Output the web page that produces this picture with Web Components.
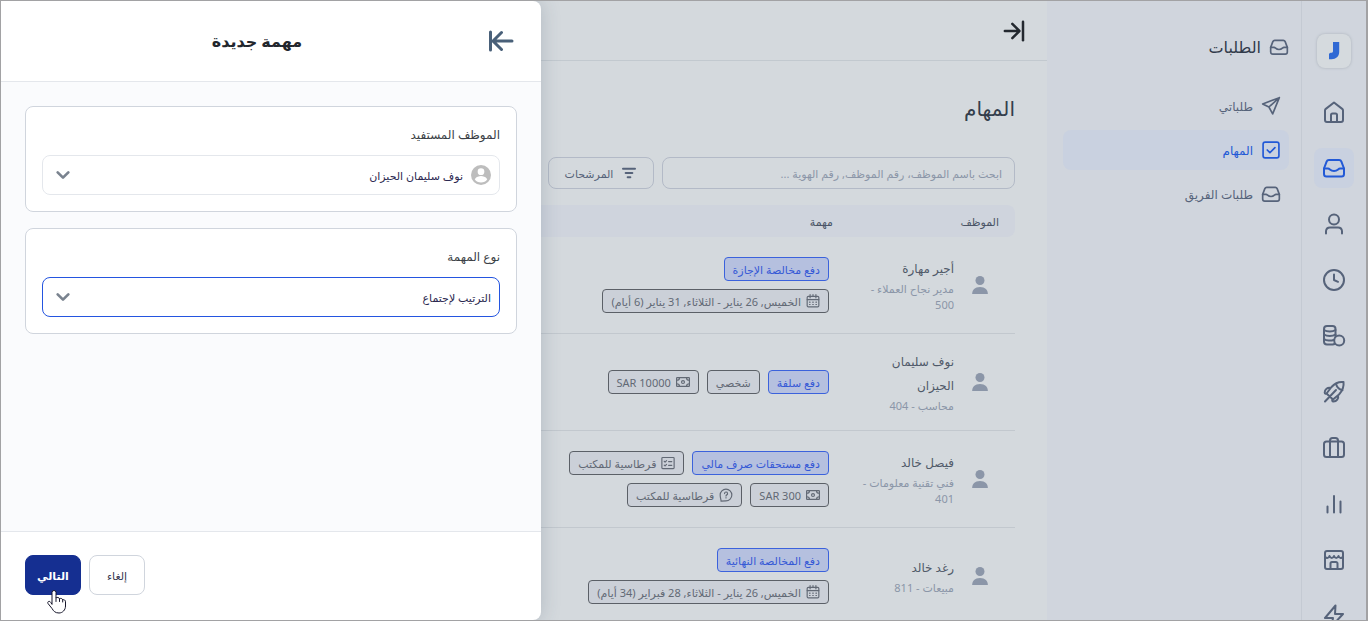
<!DOCTYPE html>
<html lang="ar" dir="rtl">
<head>
<meta charset="utf-8">
<meta name="viewport" content="width=device-width, initial-scale=1">
<title>المهام</title>
<style>
  body {
    margin: 0;
    font-family: "Noto Sans", "DejaVu Sans", sans-serif;
    color: #3f4a5a;
  }
</style>
</head>
<body>
<task-app></task-app>

<script>
const ICONS = {
  home: '<path d="M3 10.500a2 2 0 0 1 .8-1.600L12 2.500l8.200 6.400a2 2 0 0 1 .8 1.600V20a2 2 0 0 1-2 2H5a2 2 0 0 1-2-2z"/><path d="M9 22v-7a1.500 1.500 0 0 1 1.500-1.500h3A1.500 1.500 0 0 1 15 15v7"/>',
  inbox: '<path d="M2 12.500 4.600 5.600A2.500 2.500 0 0 1 7 4h10a2.500 2.500 0 0 1 2.400 1.600L22 12.500V18a2.500 2.500 0 0 1-2.500 2.500h-15A2.500 2.500 0 0 1 2 18z"/><path d="M2 12.500h4c2 0 2 2.500 6 2.500s4-2.500 6-2.500h4"/>',
  user: '<circle cx="12" cy="7.500" r="5"/><path d="M4 21.500v-2.500a4 4 0 0 1 4-3.500h8a4 4 0 0 1 4 3.500v2.500"/>',
  clock: '<circle cx="12" cy="12" r="10"/><path d="M12 6.500V12l4 1.800"/>',
  coins: '<rect x="2" y="2" width="11.500" height="18.500" rx="3"/><path d="M2 6c3 2 8.500 2 11.500 0M2 10.500c3 2 8.500 2 11.500 0M2 15c2.500 1.800 7 2 9.500 1"/><circle cx="17.200" cy="16.500" r="5" fill="#d0d5dd"/>',
  rocket: '<path d="M21.500 2c.6 4.500-.8 8.500-4.500 12.500l-6 5-6.500-6 5-6.500c3.500-4 7.500-5.500 12-5zM14 3.800a9 9 0 0 0 6.500 6.500M14 10 3 21.500M8.700 8c-3.200-.8-6 1.500-6 4.500 0 1.500 1.500 1.500 2.300 1M16 15.500c1 3.200-1.500 6-4.500 6-1.500 0-1.500-1.500-1-2.300"/>',
  briefcase: '<rect x="2" y="5.500" width="20" height="15.500" rx="2.500"/><path d="M8 21V4.500a2.500 2.500 0 0 1 2.500-2.500h3A2.500 2.500 0 0 1 16 4.500V21"/>',
  bars: '<path d="M5.500 14.500v6M12 4v16.500M18.500 9.500v11"/>',
  store: '<rect x="3" y="3" width="18" height="18" rx="2"/><path d="M3 8.500c1 2.200 3.700 2.200 4.500-.5 1 2.700 3.500 2.700 4.500 0 1 2.700 3.500 2.700 4.500 0 .8 2.700 3.500 2.700 4.500.5M8.500 21v-5.500A1.500 1.500 0 0 1 10 14h4a1.500 1.500 0 0 1 1.500 1.500V21"/>',
  bolt: '<path d="M13.500 1.500 3 14h8l-1.500 8.500L21 10h-8z"/>',
  send: '<path d="M22 2 2 9.500l7.500 3.700 4.500 8.300zM22 2 9.500 13.200"/>',
  check: '<rect x="2.500" y="2.500" width="19" height="19" rx="2.500"/><path d="m7.500 12 3.200 3.200 6-6"/>',
  enter: '<path d="M1 12h17M10 3.500l8.500 8.500-8.500 8.500"/><path d="M22.800 1v22"/>',
  leave: '<path d="M23 12H4M12.500 3.500 4 12l8.500 8.500M1.500 3v18"/>',
  filter: '<path d="M3 5.500h18M7 12h10M10 18.500h4"/>',
  avatar: '<g fill="currentColor" stroke="none"><circle cx="12" cy="6" r="6"/><path d="M1.500 24c0-5.500 3.500-9.500 10.500-9.500S22.500 18.500 22.500 24z"/></g>',
  face: '<g stroke="none"><circle cx="12" cy="12" r="12" fill="#bdbdbd"/><circle cx="12" cy="8" r="4" fill="#fff"/><path d="M4.500 17c2-3 5-3.800 7.500-3.800s5.500.8 7.500 3.800c-1.500 2.600-4.500 4-7.500 4s-6-1.400-7.500-4z" fill="#fff"/></g>',
  chevron: '<path d="m4 8 8 8 8-8"/>',
  calendar: '<rect x="2" y="4" width="20" height="18" rx="2"/><path d="M2 9.500h20M7 1v5.500M17 1v5.500M12 1v3"/><path d="M6 14h1M11.500 14h1M17 14h1M6 18h1M11.500 18h1M17 18h1"/>',
  cash: '<rect x="1" y="4.500" width="22" height="15" rx="1"/><circle cx="12" cy="12" r="2.500"/><path d="M1 9c3 0 5-2 5-4.500M23 9c-3 0-5-2-5-4.500M1 15c3 0 5 2 5 4.500M23 15c-3 0-5 2-5 4.500"/>',
  list: '<rect x="1.500" y="2.500" width="21" height="19" rx="1.500"/><path d="m5.500 9 1.500 1.500L9.500 8M5.500 15.500 7 17l2.500-2.500M13 9.500h5.500M13 16h5.500"/>',
  question: '<path d="M3.500 22.500c.5-2-1.500-5-1.500-10.500a10 10 0 1 1 10 10z"/><path d="M9.500 9.500a2.600 2.600 0 1 1 3.800 2.300c-.9.500-1.300 1-1.300 2M12 16.500v.5"/>',
  logo: '<path d="M11 3h6.200v10c0 4.500-3.200 7.200-7.700 7.200H7v-5.400l1.500-1h.8c1.200 0 1.700-.6 1.700-1.800z" fill="currentColor" stroke="none"/>',
  hand: '<path d="M8 15V3.500a2 2 0 0 1 4 0V9c1-1 3-.8 3.500.8 1-.8 2.800-.4 3.200 1 1.200-.5 2.800.3 2.800 2V17c0 4-3 7-6.500 7-4 0-5.500-2-7-4.500l-4-5c-1-2 1.500-3 2.500-1.500z" fill="#fff"/><path d="M12 9v3.500M15.500 10v2.500M18.700 11v2"/>'
};

class UiIcon extends HTMLElement {
  connectedCallback() {
    const root = this.attachShadow({ mode: 'open' });
    root.innerHTML = `
      <style>
        :host { display: block; flex: none; width: var(--size, 24px); height: var(--size, 24px); }
        svg { display: block; width: 100%; height: 100%; overflow: visible; fill: none; stroke: currentColor;
          stroke-width: var(--stroke, 2); stroke-linecap: round; stroke-linejoin: round; }
      </style>
      <svg viewBox="0 0 24 24" aria-hidden="true">${ICONS[this.getAttribute('name')]}</svg>
    `;
  }
}

class AppRail extends HTMLElement {
  constructor() {
    super();
    const items = [
      ['home', 'الرئيسية'], ['inbox', 'الطلبات'], ['user', 'الموظفون'], ['clock', 'الحضور'], ['coins', 'الرواتب'],
      ['rocket', 'الأداء'], ['briefcase', 'التوظيف'], ['bars', 'التقارير'], ['store', 'المتجر'], ['bolt', 'الأتمتة']
    ];
    this.attachShadow({ mode: 'open' }).innerHTML = `
      <style>
        :host { display: flex; flex-direction: column; align-items: center; flex: none; width: 65px; box-sizing: border-box;
          padding-top: 33px; border-left: 1px solid #c4cad3; background: #d0d5dd; overflow: hidden; }
        .logo { display: grid; place-items: center; flex: none; width: 34px; height: 34px; box-sizing: border-box;
          margin-bottom: 24px; border-radius: 8px; background: #d5dade; box-shadow: 0 0 3px #a9b0b9; color: #3069d4; }
        nav { display: flex; flex: none; flex-direction: column; gap: 16px; }
        a { display: grid; place-items: center; width: 40px; height: 40px; border-radius: 8px; color: #56637a; }
        a.on { background: #c9d1e0; color: #2259d6; }
      </style>
      <div class="logo"><ui-icon name="logo"></ui-icon></div>
      <nav>${items.map(([icon, label]) => `
        <a href="#${icon}" aria-label="${label}" class="${icon === 'inbox' ? 'on' : ''}"><ui-icon name="${icon}"></ui-icon></a>`).join('')}
      </nav>
    `;
  }
}

class SideMenu extends HTMLElement {
  constructor() {
    super();
    this.attachShadow({ mode: 'open' }).innerHTML = `
      <style>
        :host { display: block; flex: none; width: 254px; box-sizing: border-box; padding: 30px 12px 0 16px; background: #d0d5dd; }
        h2 { --size: 20px; display: flex; align-items: center; gap: 8px; height: 32px; margin: 0 0 23px;
          font-size: 16px; font-weight: 500; color: #303a4a; }
        h2 ui-icon { color: #56637a; }
        nav { display: flex; flex-direction: column; gap: 4px; }
      </style>
      <h2><ui-icon name="inbox"></ui-icon>الطلبات</h2>
      <nav><slot></slot></nav>
    `;
  }
}

class SideLink extends HTMLElement {
  connectedCallback() {
    this.attachShadow({ mode: 'open' }).innerHTML = `
      <style>
        :host { --size: 20px; display: block; font-size: 12px; color: #56637a; }
        :host([active]) { color: #2259d6; }
        a { display: flex; align-items: center; gap: 8px; height: 40px; padding: 0 8px; border-radius: 8px; color: inherit; text-decoration: none; }
        :host([active]) a { background: #c9d1e0; }
      </style>
      <a href="#"><ui-icon name="${this.getAttribute('icon')}"></ui-icon><slot></slot></a>
    `;
  }
}

class TaskChip extends HTMLElement {
  connectedCallback() {
    const icon = this.getAttribute('icon');
    this.attachShadow({ mode: 'open' }).innerHTML = `
      <style>
        :host { --size: 14px; --stroke: 2; display: flex; align-items: center; gap: 5px; height: 24px; box-sizing: border-box;
          padding: 0 8px; border: 1px solid #5b6067; border-radius: 4px; background: #cbd0d8; color: #626975;
          font-size: 11px; white-space: nowrap; }
        :host([primary]) { border-color: #3b62dc; background: #b5c0df; color: #3559d6; font-weight: 500; }
      </style>
      ${icon ? `<ui-icon name="${icon}"></ui-icon>` : ''}<slot></slot>
    `;
  }
}

class TaskTable extends HTMLElement {
  constructor() {
    super();
    const rows = [
      ['أجير مهارة', 'مدير نجاح العملاء -<br>500',
        '<task-chip primary>دفع مخالصة الإجازة</task-chip><task-chip icon="calendar">الخميس, 26 يناير - الثلاثاء, 31 يناير (6 أيام)</task-chip>'],
      ['نوف سليمان<br>الحيزان', 'محاسب - 404',
        '<task-chip primary>دفع سلفة</task-chip><task-chip>شخصي</task-chip><task-chip icon="cash"><bdi dir="ltr">SAR 10000</bdi></task-chip>'],
      ['فيصل خالد', 'فني تقنية معلومات -<br>401',
        '<task-chip primary>دفع مستحقات صرف مالي</task-chip><task-chip icon="list">قرطاسية للمكتب</task-chip><task-chip icon="cash"><bdi dir="ltr">SAR 300</bdi></task-chip><task-chip icon="question">قرطاسية للمكتب</task-chip>'],
      ['رغد خالد', 'مبيعات - 811',
        '<task-chip primary>دفع المخالصة النهائية</task-chip><task-chip icon="calendar">الخميس, 26 يناير - الثلاثاء, 28 فبراير (34 أيام)</task-chip>']
    ];
    this.attachShadow({ mode: 'open' }).innerHTML = `
      <style>
        :host { display: block; }
        table { width: 100%; table-layout: fixed; border-collapse: separate; border-spacing: 0; }
        th { height: 32px; padding: 0 16px; background: #cfd4dd; font-size: 11px; font-weight: 400; text-align: start; color: #4a5466; }
        th + th { padding: 0 12px; }
        th:first-child { width: 138px; border-radius: 0 8px 8px 0; }
        th:last-child { border-radius: 8px 0 0 8px; }
        td { height: 96px; padding: 0 16px; border-bottom: 1px solid #c2c8ce; }
        td:first-child { padding: 0 26px 0 0; }
        .person { --size: 18px; display: flex; align-items: center; gap: 17px; color: #8b96a8; }
        .name { font-size: 12px; line-height: 24px; color: #505a69; white-space: nowrap; }
        .role { font-size: 11px; line-height: 16px; color: #8b96a8; white-space: nowrap; }
        .chips { display: flex; flex-wrap: wrap; gap: 8px; max-width: 264px; }
      </style>
      <table>
        <thead><tr><th>الموظف</th><th>مهمة</th></tr></thead>
        <tbody>${rows.map(([name, role, chips]) => `
          <tr>
            <td><div class="person"><ui-icon name="avatar"></ui-icon><div><div class="name">${name}</div><div class="role">${role}</div></div></div></td>
            <td><div class="chips">${chips}</div></td>
          </tr>`).join('')}
        </tbody>
      </table>
    `;
  }
}

class TaskPage extends HTMLElement {
  constructor() {
    super();
    this.attachShadow({ mode: 'open' }).innerHTML = `
      <style>
        :host { display: block; flex: 1; min-width: 0; background: #d4d9dd; }
        header { display: flex; align-items: center; height: 59px; padding: 0 23px; border-bottom: 1px solid #c2c9cf; }
        button { font: inherit; cursor: pointer; }
        header button { --size: 20px; --stroke: 3; padding: 0; border: 0; background: none; color: #23282f; }
        main { padding: 28px 32px 0; }
        h1 { margin: 0 0 28px; font-size: 20px; line-height: 40px; font-weight: 500; color: #333e4c; }
        .tools { display: flex; gap: 8px; margin-bottom: 16px; }
        input { width: 353px; height: 32px; box-sizing: border-box; padding: 0 12px; border: 1px solid #b3bac7; border-radius: 8px;
          background: none; font: inherit; font-size: 11px; color: #505a69; }
        input::placeholder { color: #8b96a8; opacity: 1; }
        .filter { --size: 16px; --stroke: 3; display: flex; align-items: center; justify-content: center; gap: 8px; width: 106px; height: 32px;
          padding: 0; border: 1px solid #b3bac7; border-radius: 8px; background: none; font-size: 11px; color: #56637a; }
      </style>
      <header><button aria-label="طي القائمة"><ui-icon name="enter"></ui-icon></button></header>
      <main>
        <h1>المهام</h1>
        <div class="tools">
          <input type="search" aria-label="بحث" placeholder="ابحث باسم الموظف، رقم الموظف, رقم الهوية ...">
          <button class="filter"><ui-icon name="filter"></ui-icon>المرشحات</button>
        </div>
        <task-table></task-table>
      </main>
    `;
  }
}

class SelectCard extends HTMLElement {
  connectedCallback() {
    const avatar = this.hasAttribute('avatar');
    this.attachShadow({ mode: 'open' }).innerHTML = `
      <style>
        :host { display: block; padding: 16px; border: 1px solid #d0d5dd; border-radius: 8px; background: #fff; }
        label { display: block; margin-bottom: 8px; font-size: 12px; line-height: 24px; color: #3b3f46; }
        .field { display: grid; align-items: center; height: 40px; }
        .field > * { grid-area: 1 / 1; }
        select { appearance: none; width: 100%; height: 40px; padding: 0 8px; border: 1px solid #e4e7ec; border-radius: 8px; outline: 0;
          background: #fff; font: inherit; font-size: 11px; color: #2b2850; }
        :host([avatar]) select { padding-right: 36px; }
        :host([active]) select { border-color: #2455e0; }
        .face { --size: 20px; margin-right: 9px; }
        .arrow { --size: 16px; --stroke: 4; justify-self: end; margin-left: 13px; color: #7a838f; pointer-events: none; }
      </style>
      <label for="choice">${this.getAttribute('label')}</label>
      <div class="field">
        <select id="choice"><option>${this.getAttribute('value')}</option></select>
        ${avatar ? '<ui-icon class="face" name="face"></ui-icon>' : ''}
        <ui-icon class="arrow" name="chevron"></ui-icon>
      </div>
    `;
  }
}

class TaskDrawer extends HTMLElement {
  constructor() {
    super();
    this.attachShadow({ mode: 'open' }).innerHTML = `
      <style>
        :host { display: flex; flex-direction: column; position: absolute; top: 0; bottom: 0; left: 0; width: min(540px, 100%);
          border-radius: 0 8px 8px 0; overflow: hidden; background: #fff; box-shadow: 0 0 20px rgba(50, 70, 90, .22); }
        header { display: flex; align-items: center; height: 80px; padding: 0 28px 0 24px; border-bottom: 1px solid #e4e7ec; }
        h2 { flex: 1; margin: 0; font-size: 16px; font-weight: 700; text-align: center; color: #22262d; }
        button { font: inherit; cursor: pointer; }
        .close { --stroke: 3; padding: 0; border: 0; background: none; color: #496079; }
        .body { flex: 1; display: flex; flex-direction: column; gap: 16px; padding: 24px; background: #fafbfd; }
        footer { display: flex; justify-content: flex-end; gap: 8px; padding: 23px 24px 25px; border-top: 1px solid #e4e7ec; }
        footer button { position: relative; width: 56px; height: 40px; padding: 0; border: 1px solid #d0d5dd; border-radius: 8px;
          background: #fff; font-size: 11px; color: #363650; }
        footer .next { border-color: #152f91; background: #152f91; font-weight: 700; color: #fff; }
        .hand { --stroke: 1; position: absolute; top: 33px; left: 18px; color: #15152a; }
      </style>
      <header>
        <button class="close" aria-label="إغلاق"><ui-icon name="leave"></ui-icon></button>
        <h2>مهمة جديدة</h2>
      </header>
      <div class="body"><slot></slot></div>
      <footer>
        <button>إلغاء</button>
        <button class="next">التالي<ui-icon class="hand" name="hand"></ui-icon></button>
      </footer>
    `;
  }
}

class TaskApp extends HTMLElement {
  constructor() {
    super();
    this.attachShadow({ mode: 'open' }).innerHTML = `
      <style>
        :host { display: flex; position: relative; height: 100vh; box-sizing: border-box; border: 1px solid #a2a2a4; border-right-width: 2px; overflow: hidden; }
      </style>
      <app-rail></app-rail>
      <side-menu>
        <side-link icon="send">طلباتي</side-link>
        <side-link icon="check" active>المهام</side-link>
        <side-link icon="inbox">طلبات الفريق</side-link>
      </side-menu>
      <task-page></task-page>
      <task-drawer>
        <select-card avatar label="الموظف المستفيد" value="نوف سليمان الحيزان"></select-card>
        <select-card active label="نوع المهمة" value="الترتيب لإجتماع"></select-card>
      </task-drawer>
    `;
  }
}

customElements.define('ui-icon', UiIcon);
customElements.define('app-rail', AppRail);
customElements.define('side-menu', SideMenu);
customElements.define('side-link', SideLink);
customElements.define('task-chip', TaskChip);
customElements.define('task-table', TaskTable);
customElements.define('task-page', TaskPage);
customElements.define('select-card', SelectCard);
customElements.define('task-drawer', TaskDrawer);
customElements.define('task-app', TaskApp);
</script>
</body>
</html>
